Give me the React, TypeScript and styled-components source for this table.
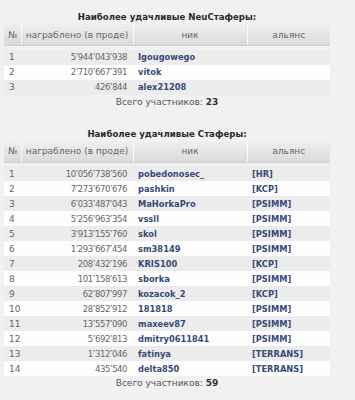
import React from 'react'
import styled, { createGlobalStyle } from 'styled-components'

const GlobalStyle = createGlobalStyle`
    html, body {
        margin: 0;
        padding: 0;
        background: #f1f1f1;
    }
    body {
        font-family: 'DejaVu Sans', Verdana, sans-serif;
        font-size: 9px;
        color: #555;
    }
`

const Page = styled.div({
    width: '326px',
    padding: '10px 0 0 4px',
    display: 'flex',
    flexDirection: 'column',
    gap: '18px',
})

const Section = styled.section``

const Title = styled.div({
    textAlign: 'center',
    fontWeight: 'bold',
    fontSize: '8.6px',
    color: '#2a2a2a',
    lineHeight: '14px',
})

const Table = styled.table`
    width: 326px;
    border-collapse: collapse;
    table-layout: fixed;
`

// small gap between the header and the first row
const Head = styled.thead`
    &::after {
        content: '';
        display: table-row;
        height: 4px;
    }
`

const HeadCell = styled.th<{ $align?: string }>`
    height: 21px;
    padding: 0 4px;
    font-weight: normal;
    color: #666;
    text-align: ${(p) => p.$align || 'center'};
    background: linear-gradient(#efefef, #dadada);
    border-left: 1px solid #fafafa;
    border-bottom: 1px solid #d0d0d0;
    &:first-child {
        border-left: none;
    }
`

const Row = styled.tr<{ $even: boolean }>`
    height: 15px;
    background: ${(p) => (p.$even ? '#fefefe' : '#ececec')};
`

const Cell = styled.td({
    padding: '0 5px',
    whiteSpace: 'nowrap',
    color: '#666',
})

const Amount = styled.td({
    padding: '0 6px 0 0',
    textAlign: 'right',
    whiteSpace: 'nowrap',
    color: '#666',
    fontSize: '8.5px',
    letterSpacing: '-0.45px',
})

const Nick = styled.td({
    padding: '0 5px',
    fontWeight: 'bold',
    fontSize: '8.3px',
    color: '#384a78',
    whiteSpace: 'nowrap',
})

const Total = styled.div({
    textAlign: 'center',
    lineHeight: '14px',
    color: '#555',
    '& b': { color: '#333' },
})

type Entry = [string, string, string?]

const neu: Entry[] = [
    ['5\u2019944\u2019043\u2019938', 'Igougowego'],
    ['2\u2019710\u2019667\u2019391', 'vitok'],
    ['426\u2019844', 'alex21208'],
]

const stafers: Entry[] = [
    ['10\u2019056\u2019738\u2019560', 'pobedonosec_', '[HR]'],
    ['7\u2019273\u2019670\u2019676', 'pashkin', '[KCP]'],
    ['6\u2019033\u2019487\u2019043', 'MaHorkaPro', '[PSIMM]'],
    ['5\u2019256\u2019963\u2019354', 'vssll', '[PSIMM]'],
    ['3\u2019913\u2019155\u2019760', 'skol', '[PSIMM]'],
    ['1\u2019293\u2019667\u2019454', 'sm38149', '[PSIMM]'],
    ['208\u2019432\u2019196', 'KRIS100', '[KCP]'],
    ['101\u2019158\u2019613', 'sborka', '[PSIMM]'],
    ['62\u2019807\u2019997', 'kozacok_2', '[KCP]'],
    ['28\u2019852\u2019912', '181818', '[PSIMM]'],
    ['13\u2019557\u2019090', 'maxeev87', '[PSIMM]'],
    ['5\u2019692\u2019813', 'dmitry0611841', '[PSIMM]'],
    ['1\u2019312\u2019046', 'fatinya', '[TERRANS]'],
    ['435\u2019540', 'delta850', '[TERRANS]'],
]

const Ranking = ({ title, rows, total }: { title: string; rows: Entry[]; total: number }) => (
    <Section>
        <Title>{title}</Title>
        <Table>
            <colgroup>
                <col style={{ width: '17px' }} />
                <col style={{ width: '112px' }} />
                <col style={{ width: '114px' }} />
                <col style={{ width: '83px' }} />
            </colgroup>
            <Head>
                <tr>
                    <HeadCell $align="left">№</HeadCell>
                    <HeadCell>награблено (в проде)</HeadCell>
                    <HeadCell>ник</HeadCell>
                    <HeadCell>альянс</HeadCell>
                </tr>
            </Head>
            <tbody>
                {rows.map(([sum, nick, clan], i) => (
                    <Row key={nick} $even={i % 2 === 1}>
                        <Cell>{i + 1}</Cell>
                        <Amount>{sum}</Amount>
                        <Nick>{nick}</Nick>
                        <Nick>{clan}</Nick>
                    </Row>
                ))}
            </tbody>
        </Table>
        <Total>
            Всего участников: <b>{total}</b>
        </Total>
    </Section>
)

export default function App() {
    return (
        <Page>
            <GlobalStyle />
            <Ranking title="Наиболее удачливые NeuСтаферы:" rows={neu} total={23} />
            <Ranking title="Наиболее удачливые Стаферы:" rows={stafers} total={59} />
        </Page>
    )
}
